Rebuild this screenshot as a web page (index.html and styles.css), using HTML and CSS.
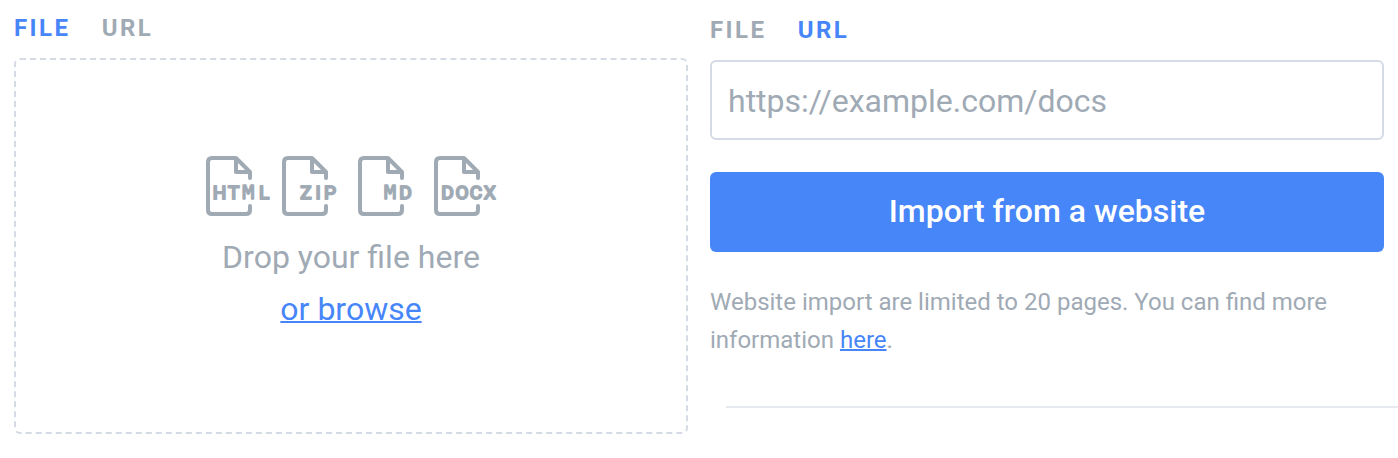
FILE: index.html
```html
<!DOCTYPE html>
<html lang="en">
<head>
<meta charset="utf-8">
<title>Import</title>
<link rel="stylesheet" href="styles.css">
</head>
<body>
<svg width="0" height="0" class="defs">
  <symbol id="file" viewBox="0 0 66 60"><path d="M44 22V16L30 2H6Q2 2 2 6V54Q2 58 6 58H40Q44 58 44 54V50M30 2V16H44"/></symbol>
</svg>
<main class="page">
  <section class="panel panel-file">
    <nav class="tabs"><a class="tab active">FILE</a><a class="tab">URL</a></nav>
    <div class="dropzone">
      <div class="icons">
        <svg class="icon" viewBox="0 0 66 60"><use href="#file"/><text y="43" x="13.6 27.7 42.3 58">HT<tspan class="narrow">M</tspan>L</text></svg>
        <svg class="icon" viewBox="0 0 66 60"><use href="#file"/><text y="43" x="24 36 48">ZIP</text></svg>
        <svg class="icon" viewBox="0 0 66 60"><use href="#file"/><text y="43" x="32 47.5"><tspan class="narrow">M</tspan>D</text></svg>
        <svg class="icon" viewBox="0 0 66 60"><use href="#file"/><text y="43" x="13.5 28 42 55.7">DOCX</text></svg>
      </div>
      <p class="drop-text">Drop your file here</p>
      <a class="link browse">or browse</a>
    </div>
  </section>
  <section class="panel panel-url">
    <nav class="tabs"><a class="tab">FILE</a><a class="tab active">URL</a></nav>
    <input class="url-input" type="text" placeholder="https://example.com/docs">
    <button class="import">Import from a website</button>
    <p class="note">Website import are limited to 20 pages. You can find more information <a class="link">here</a>.</p>
    <hr class="divider">
  </section>
</main>
</body>
</html>
```
FILE: styles.css
```css
* { box-sizing: border-box; }
body {
  margin: 0;
  background: #fff;
  color: #9faab5;
  font-family: Roboto, sans-serif;
}
.defs { position: absolute; }
.page {
  display: grid;
  grid-template-columns: 674px 688px;
  column-gap: 22px;
  height: 458px;
  padding-left: 14px;
  overflow: hidden;
}
.panel { display: flex; flex-direction: column; }
.panel-file { padding-top: 14px; }
.panel-url { padding-top: 16px; }
.tabs { display: flex; gap: 31.4px; height: 44px; }
.tab {
  font-size: 24px;
  line-height: 28px;
  font-weight: 700;
  letter-spacing: 2.4px;
}
.active, .link { color: #4786f9; }
.link {
  text-decoration: underline;
  text-decoration-thickness: 2px;
}
.dropzone {
  display: flex;
  flex-direction: column;
  align-items: center;
  height: 376px;
  padding-top: 96px;
  border: 2px dashed #d5dbe5;
  border-radius: 6px;
}
.icons { display: flex; gap: 10px; margin-left: 4px; }
.icon {
  width: 66px;
  height: 60px;
  fill: none;
  stroke: #9faab5;
  stroke-width: 4;
  stroke-linecap: round;
  stroke-linejoin: round;
  overflow: visible;
}
.icon text {
  fill: #9faab5;
  stroke-width: 2;
  font: 19px Roboto, sans-serif;
  text-anchor: middle;
}
.icon .narrow {
  font-family: "DejaVu Sans Mono", monospace;
  font-size: 20px;
  stroke-width: 1.4;
}
.drop-text, .browse { margin: 0; font-size: 32px; line-height: 52px; }
.drop-text { margin-top: 15px; }
.url-input {
  width: 674px;
  height: 80px;
  padding: 2px 16px 0;
  border: 2px solid #d5dbe5;
  border-radius: 6px;
  font: 32px Roboto, sans-serif;
}
.url-input::placeholder { color: #9faab5; opacity: 1; }
.import {
  width: 674px;
  height: 80px;
  margin-top: 32px;
  padding: 0 0 2px;
  border: 0;
  border-radius: 6px;
  background: #4786f9;
  color: #fff;
  font: 500 32px Roboto, sans-serif;
}
.note { width: 660px; margin: 31px 0 0; font-size: 24px; line-height: 38px; }
.divider {
  width: 672px;
  height: 2px;
  margin: 47px 0 0 16px;
  border: 0;
  background: #e6eaee;
}
```
